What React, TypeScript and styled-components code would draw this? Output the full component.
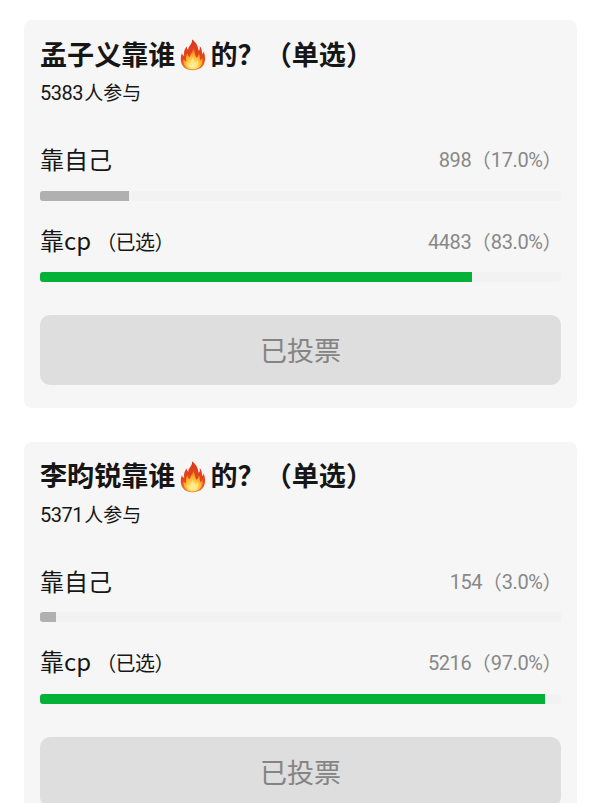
import React from "react";
import styled, { createGlobalStyle } from "styled-components";

const GlobalStyle = createGlobalStyle`
  * { box-sizing: border-box; }
  body {
    margin: 0;
    background: #fff;
    color: #161616;
    font-family: "Noto Sans CJK SC", "Noto Sans", sans-serif;
  }
`;

const Page = styled.main`
  width: 600px;
  height: 803px;
  overflow: hidden;
  padding: 20px 23px 0 24px;
  display: flex;
  flex-direction: column;
  gap: 33.6px;
`;

const Card = styled.section`
  flex: none;
  height: 388px;
  padding: 13px 16px 0;
  border-radius: 8px;
  background: #f6f6f6;
`;

const Title = styled.h2`
  margin: 0;
  height: 40px;
  display: flex;
  align-items: center;
  font-size: 27.1px;
  font-weight: 700;
  line-height: 39px;
  white-space: pre;
`;

const FlameIcon = styled.svg`
  flex: none;
  width: 26px;
  height: 32px;
  margin: 4px 4px 0 5px;
`;

const Participants = styled.p`
  margin: 5px 0 0;
  font-size: 19px;
  line-height: 28px;
  height: 28px;
`;

const Digits = styled.span`
  margin-right: 1px;
  font-family: Roboto, sans-serif;
  font-size: 20px;
  letter-spacing: -0.45px;
`;

const Options = styled.div`
  margin-top: 35px;
`;

const Option = styled.div`
  height: 81.8px;
`;

const OptionRow = styled.div`
  height: 36px;
  display: flex;
  justify-content: space-between;
  align-items: center;
  line-height: 36px;
  white-space: nowrap;
`;

const Label = styled.span`
  font-size: 24px;
`;

const Chosen = styled.span`
  margin-left: 5px;
  font-size: 20px;
  letter-spacing: -0.5px;
`;

const Result = styled.span`
  display: flex;
  align-items: center;
  padding-top: 2px;
  margin-right: -1px;
  color: #888;
  font-family: Roboto, "Noto Sans CJK SC", sans-serif;
  font-size: 20px;
  letter-spacing: -0.4px;
`;

const Mark = styled.span`
  font-family: "Noto Sans CJK SC", sans-serif;
  font-size: 19.5px;
  letter-spacing: 0;
`;

const Track = styled.div`
  height: 10px;
  margin-top: 13.6px;
  border-radius: 3px;
  overflow: hidden;
  background: #f2f2f2;
`;

const Fill = styled.div<{ $percent: number; $chosen?: boolean }>`
  width: ${(p) => p.$percent}%;
  height: 100%;
  background: ${(p) => (p.$chosen ? "#04b238" : "#b0b0b0")};
`;

const VoteButton = styled.button`
  display: block;
  width: 100%;
  height: 70px;
  margin-top: 10.4px;
  padding: 0;
  border: 0;
  border-radius: 10px;
  background: #dedede;
  color: #848484;
  font: 400 27px/70px "Noto Sans CJK SC", sans-serif;
`;

function Flame({ id }: { id: string }) {
  return (
    <FlameIcon viewBox="1 0 27 31" preserveAspectRatio="none" aria-hidden="true">
      <defs>
        <linearGradient id={`${id}-outer`} x1="0" y1="0" x2="0" y2="1">
          <stop offset="0" stopColor="#d93a1c" />
          <stop offset="0.6" stopColor="#e8451a" />
          <stop offset="1" stopColor="#ee7a22" />
        </linearGradient>
        <radialGradient id={`${id}-inner`} cx="0.5" cy="0.8" r="0.75">
          <stop offset="0" stopColor="#ffee8a" />
          <stop offset="0.45" stopColor="#ffc63c" />
          <stop offset="1" stopColor="#f2701f" />
        </radialGradient>
      </defs>
      <path
        fill={`url(#${id}-outer)`}
        d="M13.500 0.500C17 2.500 20 6.500 20.200 11.500C21.800 10.500 22 8.500 21.300 6.800C24 9 23.500 12 24.300 14.500C25.200 14 25.500 13 25.200 11.500C28.800 18.500 28 30 14.500 30.300C2 30 0 20.500 3 13.500C3.500 15.200 4.200 16 5.300 16.400C4.800 12.200 5.700 9.500 8.200 7C8 8.800 8.400 9.800 9.500 10.500C9.500 6.500 14 5 13.500 0.500Z"
      />
      <path
        fill={`url(#${id}-inner)`}
        d="M14.500 9C17 12 15.800 15 18.200 18.200C20 16.800 20.600 15 20.500 13.500C22 16 21.200 18.500 22.300 20.800C23.300 20 23.900 19 24.100 18C25.500 24.500 21.500 29.500 14.500 29.600C7 29.500 3.700 24.500 4.700 19.500C5.500 20.800 6.500 21.500 7.600 21.800C6.700 18 7.400 15.500 8.700 13.800C9 15.800 9.800 17 11.200 17.600C11.400 14.500 14.800 13 14.500 9Z"
      />
      <path
        fill="#fff0a0"
        opacity="0.6"
        d="M14.200 18C14.900 21 16 22 17.300 22.800C18.500 22 19 21 19.200 20C21 24.500 19.200 28.300 14.500 28.600C9.800 28.300 7.800 25.500 8.700 22.500C9.500 23.500 10.500 24 11.500 24C11.500 21.500 13.800 20.500 14.200 18Z"
      />
    </FlameIcon>
  );
}

interface PollOption {
  name: string;
  votes: number;
  share: string;
  bar: number;
  chosen?: boolean;
}

interface Poll {
  id: string;
  person: string;
  total: number;
  options: PollOption[];
}

const polls: Poll[] = [
  {
    id: "meng",
    person: "孟子义",
    total: 5383,
    options: [
      { name: "靠自己", votes: 898, share: "17.0%", bar: 17 },
      { name: "靠cp", votes: 4483, share: "83.0%", bar: 83, chosen: true },
    ],
  },
  {
    id: "li",
    person: "李昀锐",
    total: 5371,
    options: [
      { name: "靠自己", votes: 154, share: "3.0%", bar: 3 },
      { name: "靠cp", votes: 5216, share: "97.0%", bar: 97, chosen: true },
    ],
  },
];

export default function App() {
  return (
    <>
      <GlobalStyle />
      <Page>
        {polls.map((poll) => (
          <Card key={poll.id}>
            <Title>
              <span>{poll.person}靠谁</span>
              <Flame id={poll.id} />
              <span>的？（单选）</span>
            </Title>
            <Participants>
              <Digits>{poll.total}</Digits>人参与
            </Participants>
            <Options>
              {poll.options.map((option) => (
                <Option key={option.name}>
                  <OptionRow>
                    <Label>
                      {option.name}
                      {option.chosen && <Chosen>（已选）</Chosen>}
                    </Label>
                    <Result>
                      <span>{option.votes}</span>
                      <Mark>（</Mark>
                      <span>{option.share}</span>
                      <Mark>）</Mark>
                    </Result>
                  </OptionRow>
                  <Track>
                    <Fill $percent={option.bar} $chosen={option.chosen} />
                  </Track>
                </Option>
              ))}
            </Options>
            <VoteButton>已投票</VoteButton>
          </Card>
        ))}
      </Page>
    </>
  );
}
